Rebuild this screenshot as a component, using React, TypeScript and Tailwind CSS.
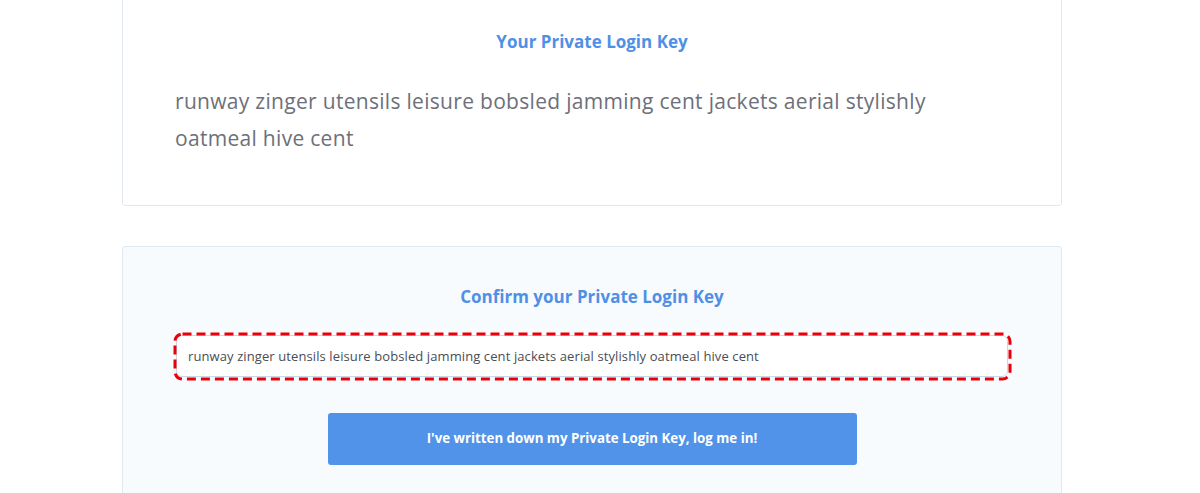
export default function App() {
  const key = "runway zinger utensils leisure bobsled jamming cent jackets aerial stylishly oatmeal hive cent"

  return (
    <div className="min-h-screen bg-white overflow-hidden font-['Open_Sans',sans-serif]">
      <div className="ml-[122px] w-[940px] -mt-[20px] border border-[#e1e8f0] rounded-[3px] bg-white pt-[49px] pb-[48px] px-[52px]">
        <h2 className="text-center text-[17px] leading-[24px] font-bold text-[#4f90e6]">Your Private Login Key</h2>
        <p className="mt-[29px] text-[21px] leading-[37px] tracking-[0.3px] text-[#6d7079]">{key}</p>
      </div>

      <div className="ml-[122px] w-[940px] mt-[40px] border border-[#e1e8f0] rounded-[3px] bg-[#f8fbfe] pt-[38px] pb-[40px] px-[50px]">
        <h2 className="text-center text-[17px] leading-[24px] font-bold text-[#4f90e6]">Confirm your Private Login Key</h2>
        <div className="relative mt-[23px] p-[3px]">
          <input
            type="text"
            readOnly
            value={key}
            className="block w-full h-[42px] px-[11px] bg-white border border-[#c9d6e6] rounded-[6px] text-[13px] tracking-[0.1px] text-[#4a4d55] outline-none"
          />
          <svg className="absolute inset-[1.5px] w-[calc(100%-3px)] h-[calc(100%-3px)] overflow-visible pointer-events-none">
            <rect
              x="0"
              y="0"
              width="100%"
              height="100%"
              rx="7.5"
              fill="none"
              stroke="#e8000b"
              strokeWidth="3"
              strokeDasharray="9 5"
            />
          </svg>
        </div>
        <div className="flex justify-center mt-[33px]">
          <button className="w-[529px] h-[52px] bg-[#5093e8] text-white text-[13.3px] font-bold rounded-[3px]">
            I've written down my Private Login Key, log me in!
          </button>
        </div>
      </div>
    </div>
  )
}
